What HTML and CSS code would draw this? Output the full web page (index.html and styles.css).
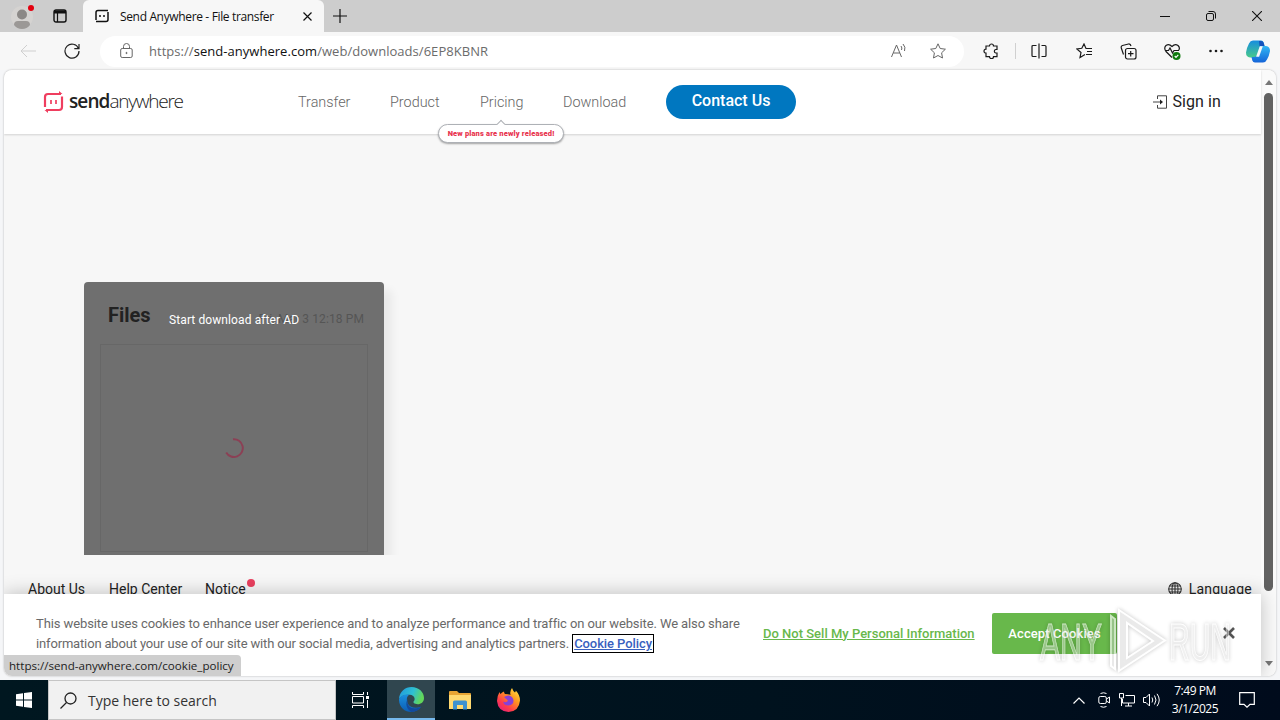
FILE: index.html
```html
<!DOCTYPE html>
<html lang="en">
<head>
  <meta charset="UTF-8">
  <meta name="viewport" content="width=device-width, initial-scale=1.0">
  <title>Send Anywhere - File transfer</title>
  <link rel="stylesheet" href="styles.css">
</head>
<body>

  <!-- tabs -->
  <div class="tabbar">
    <svg class="profile" width="24" height="26" viewBox="0 0 24 26"><circle cx="11" cy="14" r="11" fill="#d5d3d1"/><circle cx="11" cy="11.500" r="5" fill="#8b8886"/><path d="M3 22q0-4 4-4h8q4 0 4 4-3 4-8 4t-8-4z" fill="#9b9896"/><circle cx="20" cy="5" r="3" fill="#e3000f"/></svg>
    <svg class="workspaces" width="14" height="14" viewBox="0 0 14 14" fill="none" stroke="#111"><rect x="1" y="1" width="12" height="12" rx="2" stroke-width="1.4"/><path d="M1 3h12" stroke-width="3"/><path d="M4.5 4v9" stroke-width="1.2"/></svg>
    <div class="tab">
      <svg width="14" height="14" viewBox="0 0 14 14" fill="none" stroke="#111" stroke-width="1.5"><path d="M1 11V3.500Q1 1.500 3 1.500H13M13 3v7.500Q13 12.500 11 12.500H1"/><path d="M5 6v2M9 6v2"/></svg>
      <span class="tab-title">Send Anywhere - File transfer</span>
      <svg class="tab-close" width="9" height="9" viewBox="0 0 9 9" stroke="#111" stroke-width="1.2"><path d="M.5.5l8 8M8.500.5l-8 8"/></svg>
    </div>
    <svg class="new-tab" width="14" height="14" viewBox="0 0 14 14" stroke="#111" stroke-width="1.2"><path d="M7 0v14M0 7h14"/></svg>
    <div class="window-buttons">
      <svg width="10" height="10" viewBox="0 0 10 10" stroke="#111"><path d="M0 5.500h10"/></svg>
      <svg width="10" height="10" viewBox="0 0 10 10" fill="none" stroke="#111"><rect x=".5" y="2.500" width="7" height="7" rx="1.500"/><path d="M2.500.5H7Q9.500.5 9.500 3v4.500"/></svg>
      <svg width="10" height="10" viewBox="0 0 10 10" stroke="#111" stroke-width="1.1"><path d="M0 0l10 10M10 0L0 10"/></svg>
    </div>
  </div>

  <!-- address bar -->
  <div class="toolbar">
    <svg class="back" width="16" height="14" viewBox="0 0 16 14" fill="none" stroke="#cfcfcf"><path d="M16 7H1M7 1L1 7l6 6"/></svg>
    <svg class="reload" width="16" height="16" viewBox="0 0 16 16" fill="none" stroke="#222" stroke-width="1.200"><path d="M14.500 5.500A7 7 0 1 0 15 8M15 1v4.700h-4.700"/></svg>
    <div class="address">
      <svg width="13" height="16" viewBox="0 0 13 16" fill="none" stroke="#666"><rect x=".7" y="5.500" width="11.500" height="9" rx="1.500"/><path d="M3.500 5.500V3.500a3 3 0 0 1 6 0v2"/><circle cx="6.500" cy="10" r=".6" fill="#666"/></svg>
      <span class="url">https://<b>send-anywhere.com</b>/web/downloads/6EP8KBNR</span>
      <svg class="read-aloud" width="16" height="16" viewBox="0 0 16 16" fill="none" stroke="#666"><path d="M.5 14L5.500 2l5 12M2.300 10h6.500M10 3q1.500 2 .5 4M12 1q3 3 1.500 7"/></svg>
      <svg width="16" height="16" viewBox="0 0 16 16" fill="none" stroke="#666"><path d="M8 .8l2.200 4.700 5.200.7-3.800 3.600.9 5.200L8 12.500 3.500 15l.9-5.200L.6 6.200l5.200-.7z" stroke-linejoin="round"/></svg>
    </div>
    <div class="tools">
      <svg class="puzzle" width="16" height="16" viewBox="0 0 16 16" fill="none" stroke="#1a1a1a" stroke-width="1.200"><path d="M3 3h3.500a2 2 0 0 1 4 0H14v3.500h-1.300a1.800 1.800 0 0 0 0 3.500H14v3.700h-3.500a2 2 0 0 1-4 0H3v-3.500a2 2 0 0 1 0-4z"/></svg>
      <i class="divider"></i>
      <svg class="split" width="16" height="16" viewBox="0 0 16 16" fill="none" stroke="#1a1a1a" stroke-width="1.200"><path d="M5.500 2.500H2q-1 0-1 1v9q0 1 1 1h3.500M10.500 2.500H14q1 0 1 1v9q0 1-1 1h-3.500M8 .5v15"/></svg>
      <svg class="favorites" width="16" height="16" viewBox="0 0 16 16" fill="none" stroke="#1a1a1a" stroke-width="1.200"><path d="M9 11.500L4 14.500l1-5L.8 6l5-.7L8 1l2 4.500h6M11 8.500h5M10 11.500h6"/></svg>
      <svg class="collections" width="17" height="17" viewBox="0 0 17 17" fill="none" stroke="#1a1a1a" stroke-width="1.200"><rect x="5.500" y="5.500" width="10.500" height="10.500" rx="2"/><path d="M10.700 8v5.500M8 10.700h5.500M3.500 11.500L1.300 5q-.5-2 1.200-2.500L8.500 1q2-.3 2.500 2"/></svg>
      <svg class="health" width="17" height="17" viewBox="0 0 17 17" fill="none" stroke="#1a1a1a" stroke-width="1.200"><path d="M8 14.500L2 8.500Q-.5 5 2 2.500q3-2 6 1 3-3 6-1 2.500 2.500.5 5M1 7.500h3.500L6 5l2.500 5L10 7.500h5"/><circle cx="12.500" cy="13" r="4" fill="#0e7a0d" stroke="none"/><path d="M10.700 13l1.300 1.300 2.300-2.400" stroke="#fff"/></svg>
      <svg class="more" width="14" height="4" viewBox="0 0 14 4" fill="#1a1a1a"><circle cx="1.500" cy="2" r="1.300"/><circle cx="7" cy="2" r="1.300"/><circle cx="12.500" cy="2" r="1.300"/></svg>
      <svg class="copilot" width="24" height="23" viewBox="0 0 24 23">
        <defs>
          <linearGradient id="cpA" x1="0" y1="0" x2="0" y2="1"><stop offset="0" stop-color="#168ddf"/><stop offset="1" stop-color="#48c98b"/></linearGradient>
          <linearGradient id="cpB" x1="0" y1="0" x2="0" y2="1"><stop offset="0" stop-color="#31b7f4"/><stop offset="1" stop-color="#1464d8"/></linearGradient>
        </defs>
        <path d="M7 .5h8q2 0 2.700 2L18.500 6H16q-2 0-2.600 2l-2.200 7q-.8 2.500-3 2.500H4q-4-.5-4-5Q1 7 3 3.500 4.300.5 7 .5z" fill="url(#cpA)"/>
        <path d="M17 22.500H9q-2 0-2.700-2L5.500 17H8q2.200 0 3-2l2.400-7q.7-2 2.800-2H20q4 .5 4 5-1 5.500-3 8.500-1.300 3-4 3z" fill="url(#cpB)"/>
        <path d="M13 1h2q2 0 2.700 2l.8 3h-5z" fill="#1553bd"/>
        <path d="M13.800 6.300h3l-3.700 10.400h-3z" fill="#f7f7f7"/>
      </svg>
    </div>
  </div>

  <div class="viewport">
    <div class="site">
      <header class="site-header">
        <div class="logo">
          <svg width="21" height="22" viewBox="0 0 21 22" fill="none" stroke="#ef3e5f" stroke-width="2.200"><path d="M2 16V6q0-3 3-3h13M19 5.500V16q0 3-3 3H3"/><path d="M16 0l3.500 3H16zM5 22l-3.500-3H5z" fill="#ef3e5f" stroke="none"/><path d="M8 9v4M13 9v4" stroke-width="1.700"/></svg>
          <span class="logo-text"><b>send</b>anywhere</span>
        </div>
        <nav class="menu">
          <a class="m-transfer">Transfer</a>
          <a class="m-product">Product</a>
          <a class="m-pricing">Pricing<span class="bubble">New plans are newly released!</span></a>
          <a class="m-download">Download</a>
        </nav>
        <a class="contact">Contact Us</a>
        <a class="signin">
          <svg width="15" height="14" viewBox="0 0 15 14" fill="none" stroke="#444"><path d="M4.500 4V.8h9v12.400h-9V10M0 7h9"/><path d="M7 4.500L10 7 7 9.500z" fill="#222" stroke="none"/></svg>
          <span>Sign in</span>
        </a>
      </header>

      <main>
        <section class="card">
          <div class="card-head">
            <h2>Files</h2>
            <time>Fri, Mar 3 12:18 PM</time>
            <span class="ad-note">Start download after AD</span>
          </div>
          <div class="file-list">
            <svg width="20" height="20" viewBox="0 0 20 20" fill="none" stroke="#8c4055" stroke-width="2"><path d="M9 1.200A8.900 8.900 0 1 1 2.200 14.500"/></svg>
          </div>
        </section>
      </main>

      <footer class="site-footer">
        <a class="f-about">About Us</a>
        <a class="f-help">Help Center</a>
        <a class="f-notice">Notice<i class="dot"></i></a>
        <a class="f-language">
          <svg width="14" height="14" viewBox="0 0 14 14" fill="none" stroke="#333" stroke-width="1.100"><circle cx="7" cy="7" r="6.300"/><ellipse cx="7" cy="7" rx="3" ry="6.300"/><path d="M7 .7v12.600M.7 7h12.600M1.500 4h11M1.500 10h11"/></svg>
          <span>Language</span>
        </a>
      </footer>

      <div class="cookies">
        <p><span class="line-1">This website uses cookies to enhance user experience and to analyze performance and traffic on our website. We also share</span><br><span class="line-2">information about your use of our site with our social media, advertising and analytics partners.</span> <a class="policy">Cookie Policy</a></p>
        <a class="do-not-sell">Do Not Sell My Personal Information</a>
        <button class="accept">Accept Cookies</button>
        <svg class="dismiss" width="12" height="12" viewBox="0 0 12 12" stroke="#555" stroke-width="2.600"><path d="M1 1l10 10M11 1L1 11"/></svg>
      </div>
      <div class="status">https://send-anywhere.com/cookie_policy</div>
    </div>

    <div class="scrollbar">
      <i class="arrow-up"></i>
      <i class="thumb"></i>
      <i class="arrow-down"></i>
    </div>
  </div>

  <div class="taskbar">
    <div class="start">
      <svg width="16" height="16" viewBox="0 0 16 16" fill="#fff"><path d="M0 2.300l7-1v6.200H0zM8 1.100L16 0v7.500H8zM0 8.500h7v6.200l-7-1zM8 8.500h8V16l-8-1.100z"/></svg>
    </div>
    <div class="search">
      <svg width="17" height="17" viewBox="0 0 17 17" fill="none" stroke="#222" stroke-width="1.300"><circle cx="10.500" cy="6.500" r="5.500"/><path d="M6.500 10.500L.5 16.500"/></svg>
      <span>Type here to search</span>
    </div>
    <div class="task view">
      <svg width="17" height="16" viewBox="0 0 17 16" fill="none" stroke="#fff"><path d="M.5 0v2.500h11V0M.5 16v-2.500h11V16M.5 4.500h11v6.500H.5zM15.500 0v3M15.500 8v8"/><path d="M14 4h3v3h-3z" fill="#fff" stroke="none"/></svg>
    </div>
    <div class="task active">
      <svg width="25" height="25" viewBox="0 0 24 24">
        <defs>
          <linearGradient id="edA" x1="0" y1="0" x2="1" y2=".3"><stop offset="0" stop-color="#2196dc"/><stop offset=".6" stop-color="#2ec0d3"/><stop offset="1" stop-color="#62d65b"/></linearGradient>
          <linearGradient id="edB" x1="0" y1="0" x2="0" y2="1"><stop offset="0" stop-color="#1b8fdd"/><stop offset="1" stop-color="#0c5db4"/></linearGradient>
        </defs>
        <path d="M0 11.500C.5 4.500 6 0 12 0c7 0 12 5 12 10.500 0 4-3 6-6 6-3.500 0-4.500-1.500-4-2.500 2-2 1-6-3.500-6.500C6 7 2 8.500 0 11.500z" fill="url(#edA)"/>
        <path d="M0 11.500C2 8 6 6.500 10 7.500 7 9 7 13 8.500 16c2 3.500 7 5 12.500 3-2 3-5.500 5-9 5C5 24-.3 18.500 0 11.500z" fill="url(#edB)"/>
        <path d="M8.700 11C7 15 9 20 14 20.500c3 .3 6-.7 7.500-2-2 3.500-5.500 5.500-9.500 5.500-4-2-7-8-3.300-13z" fill="#134a9c"/>
      </svg>
    </div>
    <div class="task app">
      <svg width="22" height="19" viewBox="0 0 22 19"><path d="M0 1q0-1 1-1h7l2 2h11q1 0 1 1v15H0z" fill="#e8a534"/><path d="M0 4h22v14H0z" fill="#ffd970"/><path d="M4 11q0-1.500 1.500-1.500h11Q18 9.500 18 11v7.500h-4V14H8v4.500H4z" fill="#3d91cf"/></svg>
    </div>
    <div class="task app">
      <svg width="23" height="24" viewBox="0 0 23 24">
        <defs><linearGradient id="ffx" x1="1" y1="0" x2=".2" y2="1"><stop offset="0" stop-color="#fff14b"/><stop offset=".4" stop-color="#ff9a1f"/><stop offset=".75" stop-color="#ff3b4b"/><stop offset="1" stop-color="#e5207a"/></linearGradient></defs>
        <path d="M15 0q1 3 3 4.500 1-1 .8-2Q23 7 23 12.500 22 23.500 11.500 24 1 23.500 0 13q0-5 2.500-9 .5 1.500 1 2Q5 4 7 3.500q0 1.500 1 2.500 4 0 5.500 1Q12.500 3 15 0z" fill="url(#ffx)"/>
        <path d="M7 9q3-2 5-1.500 4 1 4.500 5 0 4.500-5 5-5 0-5.300-4 1.500 1 3 .5 2-.5 1.300-2Q9 11 7 9z" fill="#8740d8"/>
      </svg>
    </div>
    <div class="tray">
      <svg width="12" height="7" viewBox="0 0 12 7" fill="none" stroke="#fff" stroke-width="1.200"><path d="M.5 6.500L6 1l5.500 5.500"/></svg>
      <svg class="meet" width="12" height="16" viewBox="0 0 12 16" fill="none" stroke="#fff"><rect x=".8" y="4.500" width="7.500" height="7" rx="1.500"/><path d="M8.500 7l3-2v6l-3-2M2.500 1.500q3-1.500 6 0M2.500 14.500q3 1.500 6 0"/></svg>
      <svg class="net" width="16" height="14" viewBox="0 0 16 14" fill="none" stroke="#fff"><path d="M6.500 2.500h9v7.500H3.500V6M6 13h7M9.500 10v3M.5.5h4v4.500h-4zM2.500 5v8"/></svg>
      <svg class="volume" width="17" height="14" viewBox="0 0 17 14" fill="none" stroke="#fff"><path d="M.5 4.500h2.500L6.500 1v12L3 9.500H.5zM9 4.500q1.500 2.500 0 5M11.500 2.500q3 4.500 0 9M14 .8q4.500 6.200 0 12.400"/></svg>
      <div class="clock"><span>7:49 PM</span><span>3/1/2025</span></div>
      <svg class="notes" width="16" height="16" viewBox="0 0 16 16" fill="none" stroke="#fff" stroke-width="1.200"><path d="M.7.7h14.600v11.600H11L8 15.200l-3-2.900H.7z"/></svg>
    </div>
  </div>

  <svg class="watermark" width="240" height="72" viewBox="0 0 240 72">
    <text x="5" y="55" textLength="62" lengthAdjust="spacingAndGlyphs">ANY</text>
    <path d="M80 14l-4-3v50l4 3zM84 5v61l46-30.500zM92 18v35l26-17z" fill-rule="evenodd"/>
    <text x="134" y="55" textLength="62" lengthAdjust="spacingAndGlyphs">RUN</text>
  </svg>

</body>
</html>
```
FILE: styles.css
```css
* {
  box-sizing: border-box;
}

body {
  margin: 0;
  width: 1280px;
  height: 720px;
  overflow: hidden;
  display: flex;
  flex-direction: column;
  background: #f5f6f8;
  font-family: Roboto, "Liberation Sans", sans-serif;
  position: relative;
}

svg {
  display: block;
  flex: none;
}

/* Browser tabs */
.tabbar {
  height: 32px;
  flex: none;
  display: flex;
  align-items: center;
  background: #cdcdcd;
  padding-left: 11px;
}

.workspaces {
  margin-left: 18px;
}

.tab {
  width: 241px;
  height: 32px;
  margin-left: 16px;
  padding-left: 12px;
  display: flex;
  align-items: center;
  background: #f7f7f7;
  border-radius: 6px 6px 0 0;
}

.tab-title {
  width: 183px;
  margin-left: 11px;
  font: 12px "Open Sans", sans-serif;
  letter-spacing: -0.35px;
  white-space: nowrap;
  color: #111;
}

.new-tab {
  margin-left: 9px;
}

.window-buttons {
  display: flex;
  gap: 36px;
  margin-left: auto;
  margin-right: 18px;
}

/* Address bar */
.toolbar {
  height: 38px;
  flex: none;
  display: flex;
  align-items: center;
  background: #f7f7f7;
  padding-left: 20px;
}

.reload {
  margin-left: 28px;
}

.address {
  width: 864px;
  height: 31px;
  margin-left: 20px;
  padding: 0 18px 0 20px;
  display: flex;
  align-items: center;
  background: #fff;
  border-radius: 16px;
}

.url {
  margin-left: 16px;
  margin-right: auto;
  font: 13px "Open Sans", sans-serif;
  letter-spacing: 0.04px;
  color: #6b6b6b;
}

.url b {
  font-weight: 400;
  color: #111;
}

.read-aloud {
  margin-right: 23px;
}

.tools {
  display: flex;
  align-items: center;
}

.puzzle { margin-left: 19px; }
.split { margin-left: 15px; }
.favorites { margin-left: 29px; }
.collections { margin-left: 28px; }
.health { margin-left: 27px; }
.more { margin-left: 28px; }
.copilot { margin-left: 23px; }

.divider {
  width: 1px;
  height: 16px;
  margin-left: 16px;
  background: #d0d0d0;
}

/* Page area */
.viewport {
  height: 606px;
  flex: none;
  margin: 0 4px;
  display: flex;
  background: #f7f7f7;
  border-radius: 8px;
  overflow: hidden;
  box-shadow: 0 0 2px #aaa;
}

.site {
  width: 1257px;
  position: relative;
}

.site-header {
  height: 64px;
  display: flex;
  align-items: center;
  padding-left: 39px;
  background: #fff;
  box-shadow: 0 1px 2px rgba(0, 0, 0, 0.15);
}

.logo {
  width: 255px;
  display: flex;
  align-items: center;
}

.logo-text {
  margin: -2px 0 0 5px;
  font: 300 19px "Open Sans", sans-serif;
  letter-spacing: -1.25px;
  color: #222;
}

.logo-text b {
  font-weight: 600;
  letter-spacing: -0.9px;
}

.menu {
  display: flex;
  gap: 40px;
  font-size: 14.4px;
  font-weight: 300;
  color: #666;
}

.menu a {
  position: relative;
  white-space: nowrap;
}

.m-transfer { width: 52px; }
.m-product { width: 50px; }
.m-pricing { width: 43px; }
.m-download { width: 63px; }

.bubble {
  position: absolute;
  top: 30px;
  left: -42px;
  width: 126px;
  height: 19px;
  border: 1px solid #aeb1b6;
  border-radius: 10px;
  box-shadow: 0 1px 2px rgba(0, 0, 0, 0.35);
  background: #fff;
  color: #e8354f;
  font-size: 7.5px;
  font-weight: 900;
  line-height: 17px;
  letter-spacing: 0.15px;
  text-align: center;
}

.bubble::before {
  content: "";
  position: absolute;
  top: -4px;
  left: 59px;
  width: 5px;
  height: 5px;
  border: solid #aeb1b6;
  border-width: 1px 0 0 1px;
  background: #fff;
  transform: rotate(45deg);
}

.contact {
  width: 130px;
  height: 34px;
  margin-left: 40px;
  border-radius: 17px;
  background: #0077c0;
  color: #fff;
  font-size: 16px;
  font-weight: 500;
  line-height: 32px;
  text-align: center;
}

.signin {
  display: flex;
  align-items: center;
  gap: 4px;
  margin-left: auto;
  margin-right: 40px;
  font-size: 16px;
  letter-spacing: 0.1px;
  color: #222;
}

.signin span {
  margin-top: -2px;
}

/* Files card */
main {
  height: 421px;
  padding: 148px 0 0 80px;
  overflow: hidden;
}

.card {
  width: 300px;
  height: 273px;
  padding: 0 16px;
  background: #6f6f6f;
  border-radius: 4px 4px 0 0;
  box-shadow: 8px 8px 10px rgba(0, 0, 0, 0.06);
}

.card-head {
  height: 62px;
  padding: 0 4px 0 8px;
  display: flex;
  justify-content: space-between;
  position: relative;
}

.card-head h2 {
  margin: 0;
  font-size: 20px;
  font-weight: 700;
  line-height: 66px;
  color: #222;
}

.card-head time {
  font-size: 12px;
  line-height: 74px;
  letter-spacing: 0.1px;
  color: #555;
}

.ad-note {
  position: absolute;
  left: 69px;
  top: 31px;
  font-size: 12px;
  line-height: 14px;
  letter-spacing: 0.1px;
  white-space: nowrap;
  color: #fff;
}

.file-list {
  height: 208px;
  display: flex;
  align-items: center;
  justify-content: center;
  border: 1px solid #676767;
}

/* Footer links */
.site-footer {
  display: flex;
  padding: 25px 9px 0 24px;
  font-size: 14px;
  line-height: 18px;
  color: #222;
}

.f-about { width: 81px; }
.f-help { width: 96px; }

.f-notice {
  position: relative;
}

.dot {
  position: absolute;
  top: -1px;
  right: -9px;
  width: 8px;
  height: 8px;
  border-radius: 50%;
  background: #e9405f;
}

.f-language {
  display: flex;
  align-items: center;
  gap: 7px;
  margin-left: auto;
  letter-spacing: 0.25px;
}

/* Cookie banner covers the end of the page */
.cookies {
  position: absolute;
  left: 0;
  right: 0;
  bottom: 0;
  height: 82px;
  display: flex;
  align-items: center;
  padding: 0 26px 4px 32px;
  background: #fff;
  box-shadow: 0 0 18px rgba(0, 0, 0, 0.24);
}

.cookies p {
  width: 727px;
  margin: 2px 0 0;
  font-size: 13px;
  line-height: 20px;
  white-space: nowrap;
  color: #696969;
}

.line-1 { letter-spacing: -0.105px; }
.line-2 { letter-spacing: -0.16px; }

.policy {
  margin-left: 2px;
  outline: 1px solid #000;
  outline-offset: 1px;
  font-weight: 500;
  letter-spacing: -0.08px;
  color: #3860be;
  text-decoration: underline;
}

.do-not-sell {
  width: 229px;
  font-size: 13px;
  font-weight: 500;
  white-space: nowrap;
  color: #68b84b;
  text-decoration: underline;
}

.accept {
  width: 125px;
  height: 41px;
  border: 0;
  border-radius: 2px;
  background: #68b84b;
  color: #fff;
  font: 500 13px Roboto, sans-serif;
  letter-spacing: 0.1px;
}

.dismiss {
  margin-left: auto;
}

.status {
  position: absolute;
  left: 0;
  bottom: 0;
  width: 237px;
  height: 21px;
  padding-left: 5px;
  border-radius: 0 4px 0 6px;
  background: #cecece;
  font: 11.6px/22px "Open Sans", sans-serif;
  white-space: nowrap;
  color: #222;
}

.scrollbar {
  width: 15px;
  display: flex;
  flex-direction: column;
  align-items: center;
  background: #fafafa;
  padding: 10px 0;
}

.arrow-up,
.arrow-down {
  border: 4.5px solid transparent;
}

.arrow-up {
  border-top: 0;
  border-bottom: 5px solid #777;
}

.arrow-down {
  margin-top: auto;
  border-bottom: 0;
  border-top: 5px solid #777;
}

.thumb {
  width: 9px;
  height: 498px;
  margin-top: 8px;
  border-radius: 5px;
  background: #626262;
}

/* Windows taskbar */
.taskbar {
  height: 40px;
  flex: none;
  margin-top: 4px;
  display: flex;
  background: linear-gradient(90deg, #001720, #00121e 60%, #000b1c);
}

.start,
.task {
  width: 48px;
  display: flex;
  align-items: center;
  justify-content: center;
}

.search {
  width: 288px;
  display: flex;
  align-items: center;
  gap: 11px;
  padding-left: 11px;
  border: 1px solid #c5c5c5;
  background: #f1f1f1;
  font: 14px "Open Sans", sans-serif;
  color: #333;
}

.view {
  width: 51px;
  padding-right: 2px;
}

.app {
  padding-left: 2px;
}

.active {
  background: #30464f;
  border-bottom: 2px solid #76b9ed;
}

.tray {
  display: flex;
  align-items: center;
  margin-left: auto;
  padding-right: 25px;
  color: #fff;
}

.meet { margin-left: 13px; }
.net { margin-left: 9px; }
.volume { margin-left: 8px; }

.clock {
  width: 70px;
  display: flex;
  flex-direction: column;
  align-items: center;
  font: 12px/18px "Open Sans", sans-serif;
  letter-spacing: -0.45px;
}

.notes {
  margin-left: 9px;
}

/* Watermark over everything */
.watermark {
  position: absolute;
  left: 1035px;
  top: 605px;
  opacity: 0.65;
  fill: rgba(245, 245, 245, 0.6);
  stroke: #fff;
  stroke-width: 2;
  filter: drop-shadow(0 0 2px rgba(0, 0, 0, 0.4));
}

.watermark text {
  font: 52px "Liberation Sans", sans-serif;
  stroke-width: 1;
}
```
